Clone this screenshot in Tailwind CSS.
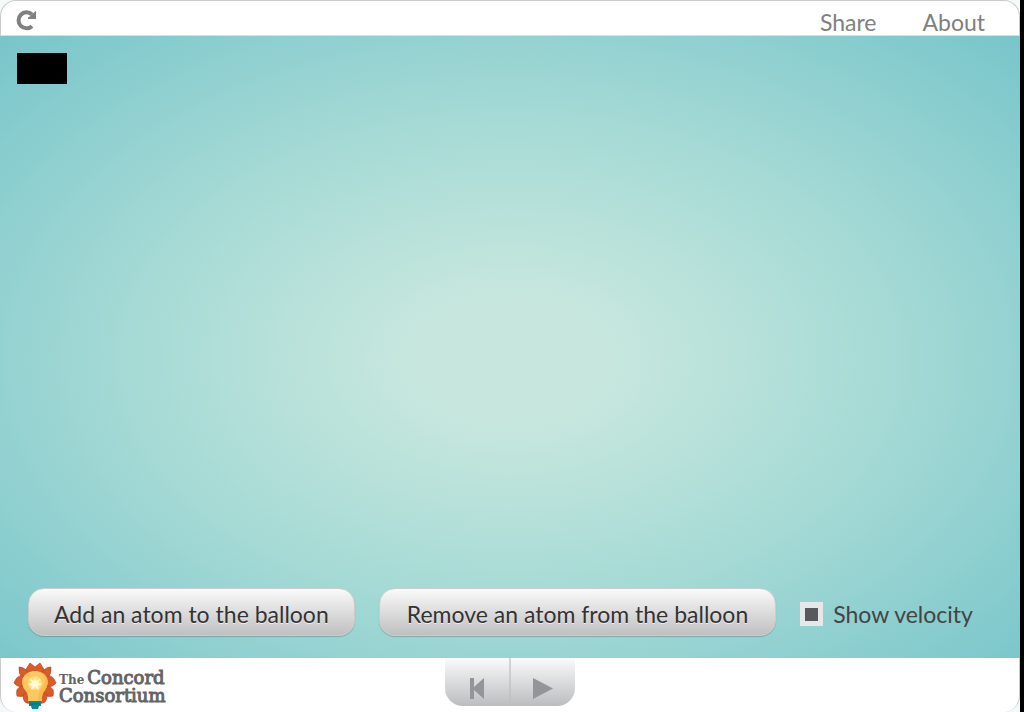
<!DOCTYPE html>
<html lang="en">
<head>
<meta charset="utf-8">
<title>Balloon interactive</title>
<script src="https://cdn.jsdelivr.net/npm/@tailwindcss/browser@4"></script>
</head>
<body class="min-h-screen bg-black pr-1 font-['Lato',sans-serif] text-[23px] text-[#333333]">
<div class="flex h-screen flex-col bg-[#f4fafa]">
  <header class="flex h-9 shrink-0 items-center justify-between rounded-t-2xl border border-[#cccccc] border-b-[#c8e8e6] bg-white pr-[34px] pl-[14px] text-[#808080]">
    <button type="button" aria-label="Reload" class="mt-[6px] size-6">
      <svg viewBox="0 0 24 24" class="size-6" fill="none"><path d="M17 5.5A8 8 0 1 0 17 17.2" stroke="#808080" stroke-width="4"/><path d="M21 2v8h-8v-1.500l2.200-1.200L19.500 3z" fill="#808080"/></svg>
    </button>
    <nav class="mt-2 flex gap-[46px]"><a href="#share">Share</a><a href="#about">About</a></nav>
  </header>
  <main class="flex flex-1 flex-col justify-between bg-[radial-gradient(ellipse_at_50%_52%,#c7e7de_13%,#a8dbd6_50%,#78c5ca_100%)] pt-[17px] pr-6 pb-[22px] pl-[17px]">
    <div class="h-[31px] w-[50px] bg-black"></div>
    <div class="flex items-center pl-[11px] whitespace-nowrap">
      <button type="button" class="h-12 rounded-2xl border border-[#cccccc] bg-linear-to-b from-[#fafafa] to-[#c0c0c0] px-[25px] pt-1 shadow-[0_1px_1px_rgba(0,0,0,0.2)] text-shadow-[0_1px_0_#eeeeee]">Add an atom to the balloon</button>
      <button type="button" class="ml-6 h-12 rounded-2xl border border-[#cccccc] bg-linear-to-b from-[#fafafa] to-[#c0c0c0] px-[27px] pt-1 shadow-[0_1px_1px_rgba(0,0,0,0.2)] text-shadow-[0_1px_0_#eeeeee]">Remove an atom from the balloon</button>
      <input id="velocity" type="checkbox" checked class="mt-1 ml-6 h-6 w-[23px] appearance-none bg-[#e6e7e8] checked:bg-[linear-gradient(#58595b,#58595b)] bg-[length:13px_13px] bg-center bg-no-repeat">
      <label for="velocity" class="mt-1 ml-[10px] text-[#444444]">Show velocity</label>
    </div>
  </main>
  <footer class="grid h-[54px] shrink-0 grid-cols-3 rounded-b-2xl border-x border-[#cccccc] bg-white">
    <a href="#concord" aria-label="The Concord Consortium" class="flex pt-1 pl-3">
      <svg viewBox="0 0 44 50" class="h-[50px] w-11 shrink-0">
        <g fill="#d95b29" stroke="#b94321" stroke-width=".7">
          <path d="M22 23L12 9L17 1L22 5L27 1L32 9Z"/>
          <path d="M22 23Q5 19 6 5Q14 4 22 23Z"/><path d="M22 23Q39 19 38 5Q30 4 22 23Z"/>
          <path d="M22 23Q6 28 1 21Q4 13 9 14Q15 15 22 23Z"/><path d="M22 23Q38 28 43 21Q40 13 35 14Q29 15 22 23Z"/>
          <path d="M22 23Q14 37 4 34Q2 26 9 24Z"/><path d="M22 23Q30 37 40 34Q42 26 35 24Z"/>
          <path d="M22 23L18 41Q10 43 10 33Z"/><path d="M22 23L26 41Q34 43 34 33Z"/>
        </g>
        <path d="M15 39Q16 33 12 28C5 18 12 9 22 9S39 18 32 28Q28 33 29 39Z" fill="#fdc85e"/>
        <path d="M29 39Q28 33 32 28C36 22 35 16 31 12Q34 22 28 27Q25 31 25 39Z" fill="#fbb950"/>
        <circle cx="22" cy="21" r="7" fill="#fee07d"/><path d="M22 15l1 4 4-2-2 4 4 1-4 2 1 4-4-3-4 3 1-4-4-2 4-1-2-4 4 2z" fill="#fffbd8"/>
        <path d="M16 39h12v5h-2l-1 3h-6l-1-3h-2z" fill="#008c99"/><path d="M17 42h10" stroke="#006b78"/>
      </svg>
      <span class="ml-[2px] flex flex-col pt-2 font-['DejaVu_Serif',serif] text-[18px] leading-4 text-[#636466]"><span class="flex items-baseline gap-[3px]"><span class="text-xs leading-4 font-bold">The</span><span class="[-webkit-text-stroke:1px_#636466]">Concord</span></span><span class="[-webkit-text-stroke:1px_#636466]">Consortium</span></span>
    </a>
    <div class="flex h-12 w-[130px] justify-self-center overflow-hidden rounded-b-[18px] bg-linear-to-b from-[#fafbfa] to-[#bcbdbf]">
      <button type="button" aria-label="Reset" class="flex flex-1 items-center justify-center border-r-2 border-[#bcbdbf]/60 pt-3"><svg class="h-[21px] w-[14px]" viewBox="0 0 14 21" fill="#939598"><path d="M0 0h4v9L14 0v21L4 12v9H0z"/></svg></button>
      <button type="button" aria-label="Play" class="flex flex-1 items-center justify-center pt-3"><svg class="h-[21px] w-5" viewBox="0 0 20 21" fill="#939598"><path d="M0 0L20 10.5 0 21z"/></svg></button>
    </div>
  </footer>
</div>
</body>
</html>
